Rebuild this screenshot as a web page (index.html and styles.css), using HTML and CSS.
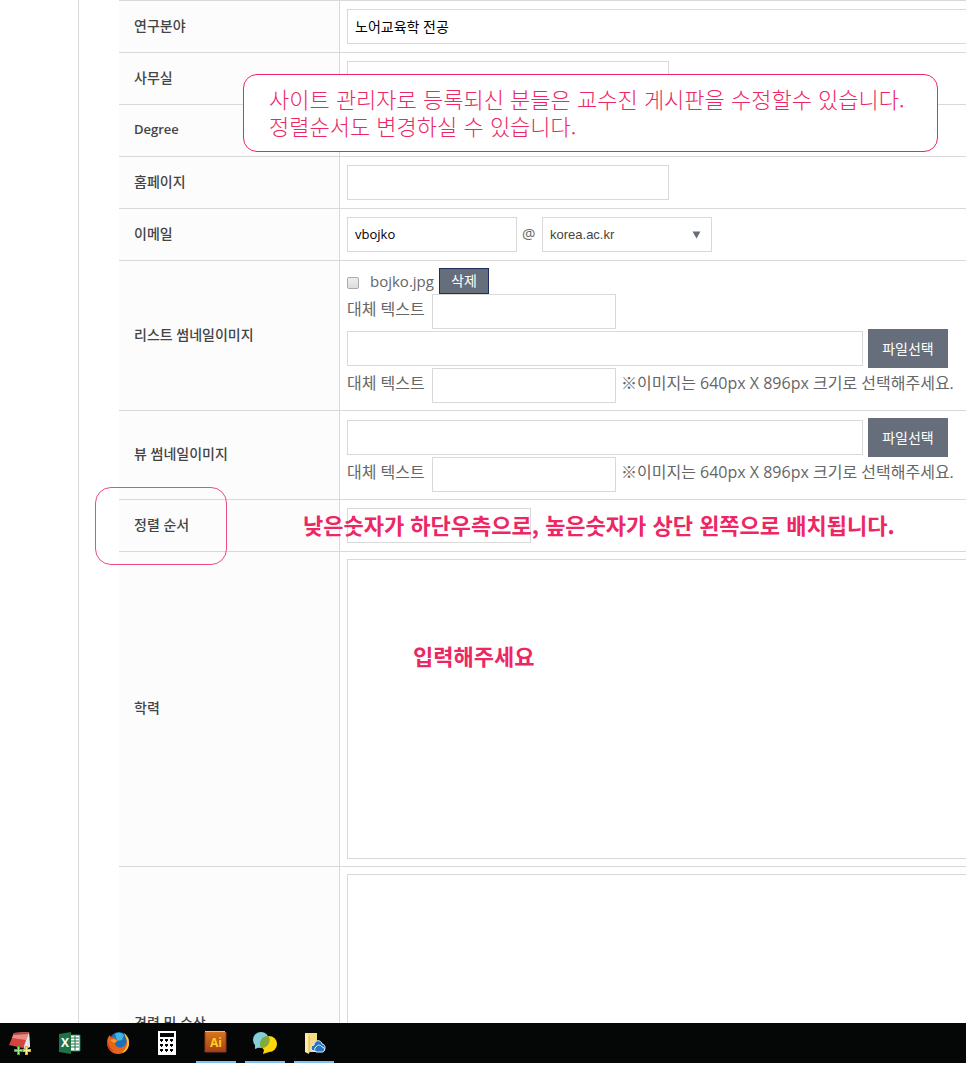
FILE: index.html
```html
<!DOCTYPE html>
<html lang="ko">
<head>
    <meta charset="UTF-8">
    <meta name="viewport" content="width=device-width, initial-scale=1.0">
    <title>교수진 게시판</title>
    <link rel="stylesheet" href="styles.css">
</head>
<body>
    <main class="screen">
        <form class="content">
            <table class="form-table">
                <tr>
                    <th><label for="field">연구분야</label></th>
                    <td><div class="line"><input type="text" id="field" class="full" value="노어교육학 전공"></div></td>
                </tr>
                <tr>
                    <th><label for="office">사무실</label></th>
                    <td><div class="line"><input type="text" id="office" class="medium"></div></td>
                </tr>
                <tr>
                    <th><label for="degree" class="latin">Degree</label></th>
                    <td><div class="line"><input type="text" id="degree" class="medium"></div></td>
                </tr>
                <tr>
                    <th><label for="homepage">홈페이지</label></th>
                    <td><div class="line"><input type="text" id="homepage" class="medium"></div></td>
                </tr>
                <tr>
                    <th><label for="email">이메일</label></th>
                    <td>
                        <div class="line">
                            <input type="text" id="email" class="email" value="vbojko">
                            <span class="at">@</span>
                            <span class="select-box">
                                <select class="email" aria-label="이메일 도메인">
                                    <option>korea.ac.kr</option>
                                </select>
                                <svg class="arrow" viewBox="0 0 8 8"><path d="M0 0.5h8L4 7.5z" fill="#666e7b"/></svg>
                            </span>
                        </div>
                    </td>
                </tr>
                <tr>
                    <th>리스트 썸네일이미지</th>
                    <td>
                        <div class="file-line">
                            <input type="checkbox" id="list-file">
                            <label for="list-file" class="file-name">bojko.jpg</label>
                            <button type="button" class="delete">삭제</button>
                        </div>
                        <div class="file-line">
                            <label for="list-alt1" class="alt">대체 텍스트</label>
                            <input type="text" id="list-alt1" class="short">
                        </div>
                        <div class="file-line">
                            <input type="text" class="path" aria-label="리스트 썸네일이미지 파일">
                            <button type="button" class="choose">파일선택</button>
                        </div>
                        <div class="file-line">
                            <label for="list-alt2" class="alt">대체 텍스트</label>
                            <input type="text" id="list-alt2" class="short">
                            <span class="hint">※이미지는 640px X 896px 크기로 선택해주세요.</span>
                        </div>
                    </td>
                </tr>
                <tr>
                    <th>뷰 썸네일이미지</th>
                    <td>
                        <div class="file-line">
                            <input type="text" class="path" aria-label="뷰 썸네일이미지 파일">
                            <button type="button" class="choose">파일선택</button>
                        </div>
                        <div class="file-line">
                            <label for="view-alt" class="alt">대체 텍스트</label>
                            <input type="text" id="view-alt" class="short">
                            <span class="hint">※이미지는 640px X 896px 크기로 선택해주세요.</span>
                        </div>
                    </td>
                </tr>
                <tr>
                    <th><label for="order">정렬 순서</label></th>
                    <td><div class="line"><input type="text" id="order" class="short"></div></td>
                </tr>
                <tr>
                    <th><label for="education">학력</label></th>
                    <td><textarea id="education"></textarea></td>
                </tr>
                <tr>
                    <th><label for="career">경력 및 수상</label></th>
                    <td><textarea id="career"></textarea></td>
                </tr>
            </table>
        </form>

        <!-- notes over the form -->
        <p class="note note-box">사이트 관리자로 등록되신 분들은 교수진 게시판을 수정할수 있습니다.<br>정렬순서도 변경하실 수 있습니다.</p>
        <div class="mark"></div>
        <p class="note note-order">낮은숫자가 하단우측으로, 높은숫자가 상단 왼쪽으로 배치됩니다.</p>
        <p class="note note-input">입력해주세요</p>
    </main>

    <nav class="taskbar">
        <button type="button" class="task" aria-label="메모">
            <svg viewBox="0 0 24 24">
                <path d="M13 4l8-3 1 15-6 3z" fill="#aeb4b8"/>
                <path d="M19 5l2-4 1 15-6 1z" fill="#e4e7e9"/>
                <path d="M6 2l15-1-6 16-14-3z" fill="#d4453d"/>
                <path d="M6 2l15-1-3 8-14-2z" fill="#e98c82"/>
                <path d="M6 2l15-1-1 2-15 1z" fill="#b0483f"/>
                <path d="M9 15h3v3h3v3h-3v3H9v-3H6v-3h3z" fill="#3fae3a"/>
                <path d="M10.5 16v7M7 19.5h7" stroke="#a9e88e"/>
                <path d="M17 15h3v3h3v3h-3v3h-3v-3h-2v-3h2z" fill="#e9b51c"/>
                <path d="M18.5 16v7M16 19.5h6" stroke="#fff08c"/>
            </svg>
        </button>
        <button type="button" class="task" aria-label="Excel">
            <svg viewBox="0 0 24 24">
                <path d="M13 4h10v16H13z" fill="#fff" stroke="#1f7244"/>
                <path d="M14 7h8M14 10h8M14 13h8M14 16h8M18 5v14" stroke="#1f7244"/>
                <path d="M2 3l12-2v22L2 21z" fill="#1f7244"/>
                <text x="8" y="16" text-anchor="middle" class="logo-text" fill="#fff">X</text>
            </svg>
        </button>
        <button type="button" class="task" aria-label="Firefox">
            <svg viewBox="0 0 24 24">
                <circle cx="13" cy="11" r="10" fill="#1d6fb8"/>
                <path d="M9 3q5-3 9 1l-2 5-5 1z" fill="#41b4e6"/>
                <path d="M18 2q5 4 5 10c0 7-5 11-11 11S1 18 1 12c0-4 1-6 3-8l1 3 4-1c-1 2 0 3 3 3-1 3-3 2-3 4 1 4 7 5 10 1 3-4 2-8-1-12z" fill="#e8641b"/>
                <path d="M18 2q5 4 5 10c0 5-3 9-7 10 4-4 6-8 5-12-1-3-2-6-3-8z" fill="#fcc62e"/>
                <path d="M2 9c0 5 2 9 7 11-5 0-8-4-8-8z" fill="#c93a1a"/>
                <path d="M4 9l5-1 2 2-3 2z" fill="#f69a2b"/>
            </svg>
        </button>
        <button type="button" class="task" aria-label="계산기">
            <svg viewBox="0 0 24 24">
                <path d="M3 0h18v24H3z" fill="#fff"/>
                <path d="M5 2h14v4H5z" fill="#050707"/>
                <path d="M5 8h3v2H7v1H6v-1H5zM10 8h3v2h-1v1h-1v-1h-1zM15 8h3v2h-1v1h-1v-1h-1zM5 13h3v2H7v1H6v-1H5zM10 13h3v2h-1v1h-1v-1h-1zM15 13h3v2h-1v1h-1v-1h-1zM5 18h3v2H7v1H6v-1H5zM10 18h3v2h-1v1h-1v-1h-1zM15 18h3v2h-1v1h-1v-1h-1z" fill="#050707"/>
            </svg>
        </button>
        <button type="button" class="task open" aria-label="Illustrator">
            <svg viewBox="0 0 24 24">
                <defs>
                    <linearGradient id="ai" x1="0" y1="0" x2="0" y2="1">
                        <stop offset="0" stop-color="#d9741f"/>
                        <stop offset="1" stop-color="#a3401c"/>
                    </linearGradient>
                </defs>
                <path d="M1 0h20v20H1z" fill="#ffc819"/>
                <path d="M1 1h21v20H1z" fill="url(#ai)"/>
                <path d="M1 21V1M22 1v20H1" fill="none" stroke="#8a3a17"/>
                <text x="12" y="16" text-anchor="middle" class="logo-text" fill="#ffcf1c">Ai</text>
            </svg>
        </button>
        <button type="button" class="task open" aria-label="메신저">
            <svg viewBox="0 0 24 24">
                <path d="M16 5a8 8 0 0 1 0 16l-6 2 1-4A8 8 0 0 1 16 5z" fill="#fed509"/>
                <circle cx="8" cy="9" r="8" fill="#84cfdb"/>
                <path d="M2 14v4l5-2z" fill="#84cfdb"/>
                <path d="M15.500 5A8 8 0 0 0 8 17a8 8 0 0 0 7.500-12z" fill="#82aa3c"/>
            </svg>
        </button>
        <button type="button" class="task open" aria-label="폴더">
            <svg viewBox="0 0 24 24">
                <path d="M3 2h12v19H3z" fill="#f7d981"/>
                <path d="M3 2l4 3v18l-4-2z" fill="#fdeaae"/>
                <path d="M7 5v17" stroke="#d9b65c"/>
                <path d="M12 20a3 3 0 0 1 0-6c0-5 7-6 8-1 3 0 4 4 2 7z" fill="#2276c3" stroke="#e8f2fb"/>
                <path d="M14 21a3 3 0 0 1 0-5c2-3 5-2 6 0 3 0 3 4 1 5z" fill="#2276c3" stroke="#e8f2fb"/>
            </svg>
        </button>
    </nav>
</body>
</html>
```
FILE: styles.css
```css
* {
    box-sizing: border-box;
}
body {
    margin: 0;
    height: 100vh;
    padding-bottom: 14px;
    display: flex;
    flex-direction: column;
    background-color: #fff;
    font-family: "Open Sans", "Noto Sans CJK KR", sans-serif;
    font-size: 16px;
    color: #666;
}
input, select, textarea, button {
    font-family: inherit;
    font-size: 14px;
    margin: 0;
    border-radius: 0;
}
.screen {
    position: relative;
    flex: 1;
    min-height: 0;
    overflow: hidden;
}
.content {
    margin-left: 78px;
    padding-left: 40px;
    border-left: 1px solid #d9d9d9;
}

/* form */
.form-table {
    width: calc(100% + 20px);
    border-spacing: 0;
}
.form-table th {
    width: 220px;
    padding: 0 15px 4px;
    text-align: left;
    font-size: 14px;
    font-weight: 500;
    color: #444;
    background-color: #fcfcfc;
    border-top: 1px solid #d9d9d9;
}
.form-table .latin {
    font-size: 13px;
    font-weight: 600;
}
.form-table td {
    padding: 7px;
    border-top: 1px solid #d9d9d9;
    border-left: 1px solid #d9d9d9;
}
.line, .file-line {
    display: flex;
    align-items: center;
    gap: 5px;
    white-space: nowrap;
}
.line {
    height: 37px;
}
.file-line {
    line-height: 26px;
}
input[type="text"], select {
    height: 35px;
    padding: 0 7px 2px;
    border: 1px solid #d9d9d9;
    background-color: #fff;
    color: #000;
}
.full {
    width: 100%;
}
.medium {
    width: 322px;
}
.short {
    width: 184px;
}
.path {
    width: 516px;
}
.email {
    width: 170px;
}
input.email {
    font-size: 13px;
}
.at {
    width: 15px;
    padding-bottom: 4px;
    font-size: 15px;
}
.file-name {
    font-size: 15px;
}
.alt {
    width: 80px;
    padding-bottom: 5px;
}
.hint {
    padding-bottom: 5px;
}
.select-box {
    position: relative;
}
.form-table select {
    display: block;
    appearance: none;
    padding-bottom: 0;
    font-family: "Liberation Sans", sans-serif;
    font-size: 13px;
    color: #444;
}
.arrow {
    position: absolute;
    right: 11px;
    top: 14px;
    width: 9px;
    height: 8px;
    pointer-events: none;
}
input[type="checkbox"] {
    appearance: none;
    width: 12px;
    height: 12px;
    margin: 3px 6px 0 0;
    border: 1px solid #aaa;
    border-radius: 2px;
    background: linear-gradient(#eee, #ddd);
}
.delete {
    width: 50px;
    height: 26px;
    padding: 0 0 2px;
    border: 1px solid #1c2f5e;
    background-color: #666e7b;
    color: #fff;
}
.choose {
    width: 80px;
    height: 39px;
    padding: 0 0 2px;
    border: none;
    background-color: #666e7b;
    color: #fff;
}
textarea {
    display: block;
    width: 100%;
    height: 300px;
    padding: 7px;
    border: 1px solid #d9d9d9;
    resize: none;
}

/* notes */
.note {
    position: absolute;
    margin: 0;
    font-family: "Noto Sans CJK KR", sans-serif;
    font-size: 22px;
    font-weight: 700;
    line-height: 27px;
    white-space: nowrap;
    color: #ed2664;
}
.note-box {
    left: 243px;
    top: 74px;
    width: 695px;
    height: 78px;
    padding: 10px 0 0 25px;
    border: 1px solid #ed2664;
    border-radius: 14px;
    background-color: #fff;
    font-weight: 300;
}
.note-order {
    left: 303px;
    top: 511px;
}
.note-input {
    left: 413px;
    top: 642px;
}
.mark {
    position: absolute;
    left: 95px;
    top: 487px;
    width: 132px;
    height: 78px;
    border: 1px solid #ed4c7f;
    border-radius: 16px;
}

/* taskbar */
.taskbar {
    display: flex;
    gap: 9px;
    height: 40px;
    background-color: #050707;
}
.task {
    width: 40px;
    padding: 2px 0 0;
    border: none;
    border-bottom: 2px solid transparent;
    background: none;
}
.task.open {
    border-bottom-color: #83bfec;
}
.task svg {
    display: block;
    width: 24px;
    height: 24px;
    margin: 0 auto;
}
.logo-text {
    font-family: "Open Sans", sans-serif;
    font-size: 12px;
    font-weight: 700;
}
```
